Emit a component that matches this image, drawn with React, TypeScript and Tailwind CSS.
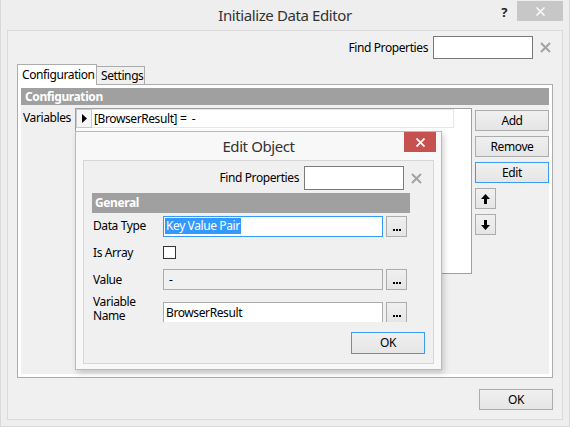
import React from "react";

function GrayX() {
  return (
    <svg width="11" height="11" viewBox="0 0 11 11">
      <path d="M1 1L10 10M10 1L1 10" stroke="#a3a3a3" strokeWidth="2" />
    </svg>
  );
}

function WhiteX({ size = 9, w = 1.6 }: { size?: number; w?: number }) {
  return (
    <svg width={size} height={size} viewBox="0 0 9 9">
      <path d="M0.5 0.5L8.5 8.5M8.5 0.5L0.5 8.5" stroke="#ffffff" strokeWidth={w} />
    </svg>
  );
}

function UpArrow() {
  return (
    <svg width="9" height="10" viewBox="0 0 9 10">
      <path d="M4.5 0L9 5H6V10H3V5H0Z" fill="#000" />
    </svg>
  );
}

function DownArrow() {
  return (
    <svg width="9" height="10" viewBox="0 0 9 10">
      <path d="M4.5 10L9 5H6V0H3V5H0Z" fill="#000" />
    </svg>
  );
}

function Btn({
  children,
  className = "",
  def = false,
}: {
  children: React.ReactNode;
  className?: string;
  def?: boolean;
}) {
  return (
    <div
      className={
        "flex items-center justify-center border bg-gradient-to-b from-[#f0f0f0] to-[#e5e5e5] text-[12px] text-black " +
        (def ? "border-[#3c9bf0] " : "border-[#acacac] ") +
        className
      }
    >
      {children}
    </div>
  );
}

function Dots() {
  return (
    <div className="flex h-[21px] w-[21px] items-end justify-center border border-[#acacac] bg-gradient-to-b from-[#f0f0f0] to-[#e5e5e5] pb-[5px]">
      <div className="flex gap-[1px]">
        <div className="h-[2px] w-[2px] bg-black" />
        <div className="h-[2px] w-[2px] bg-black" />
        <div className="h-[2px] w-[2px] bg-black" />
      </div>
    </div>
  );
}

export default function App() {
  return (
    <div className="relative h-[427px] w-[570px] overflow-hidden border-x border-b border-[#d9d9d9] bg-[#eeeeee] font-['Noto_Sans',sans-serif] text-[12px] tracking-[-0.4px] text-black">
      {/* Title bar */}
      <div className="grid h-[30px] grid-cols-[1fr_auto_1fr]">
        <div />
        <div className="pt-[4px] text-[15px] text-[#333333]">Initialize Data Editor</div>
        <div className="flex items-start justify-end pr-[6px]">
          <div className="mr-[10px] mt-[3px] text-[13px] font-bold text-[#222]">?</div>
          <div className="mt-[1px] flex h-[20px] w-[46px] items-center justify-center bg-[#c7c7c7]">
            <WhiteX size={9} w={1.5} />
          </div>
        </div>
      </div>

      {/* Inner panel */}
      <div className="mx-[6px] flex h-[390px] flex-col border border-[#dadada] bg-[#f0f0f0]">
        {/* Find properties */}
        <div className="mt-[5px] flex items-center justify-end pr-[11px]">
          <span className="mr-[5px]">Find Properties</span>
          <div className="h-[23px] w-[100px] border border-[#7a7a7a] bg-white" />
          <div className="ml-[7px] flex h-[11px] w-[11px] items-center justify-center">
            <GrayX />
          </div>
        </div>

        {/* Tabs */}
        <div className="ml-[9px] mt-[5px] flex h-[20px] items-end">
          <div className="relative z-10 -mb-[1px] flex h-[21px] w-[80px] items-start border border-b-0 border-[#acacac] bg-white pl-[4px] pt-[1px]">
            Configuration
          </div>
          <div className="flex h-[18px] w-[48px] items-center border border-b-0 border-l-0 border-[#acacac] bg-[#f0f0f0] pl-[4px]">
            Settings
          </div>
        </div>

        {/* Tab page */}
        <div className="ml-[9px] h-[294px] w-[536px] border border-[#acacac] bg-white p-[3px]">
          <div className="flex h-full flex-col bg-[#f0f0f0]">
            <div className="flex h-[17px] items-center bg-[#a0a0a0] pl-[4px] text-[12px] font-bold text-white">
              Configuration
            </div>
            <div className="mt-[3px] flex">
              <div className="w-[54px] pl-[2px] pt-[1px]">Variables</div>
              <div className="h-[166px] w-[397px] border border-[#a0a0a0] bg-white">
                <div className="flex h-[19px]">
                  <div className="flex w-[16px] items-center justify-center border border-[#c8c8c8] bg-[#f6f6f6]">
                    <svg width="5" height="9" viewBox="0 0 5 9">
                      <path d="M0 0L5 4.5L0 9Z" fill="#000" />
                    </svg>
                  </div>
                  <div className="flex w-[362px] items-center border-y border-r border-[#e6e6e6] pl-[2px]">
                    [BrowserResult] =&nbsp; -
                  </div>
                </div>
              </div>
              <div className="ml-[3px] mt-[2px] flex flex-col gap-[5px]">
                <Btn className="h-[21px] w-[74px]">Add</Btn>
                <Btn className="h-[21px] w-[74px]">Remove</Btn>
                <Btn className="h-[21px] w-[74px]" def>
                  Edit
                </Btn>
                <Btn className="h-[21px] w-[21px]">
                  <UpArrow />
                </Btn>
                <Btn className="h-[21px] w-[21px]">
                  <DownArrow />
                </Btn>
              </div>
            </div>
          </div>
        </div>

        {/* OK */}
        <div className="mt-[11px] flex justify-end pr-[9px]">
          <Btn className="h-[21px] w-[74px]">OK</Btn>
        </div>
      </div>

      {/* Edit Object dialog (overlay) */}
      <div className="absolute left-[74px] top-[131px] flex h-[239px] w-[367px] flex-col border border-[#b9b9b9] bg-[#f8f8f8] shadow-[2px_3px_6px_rgba(0,0,0,0.18)]">
        <div className="relative flex h-[28px] items-start justify-center">
          <div className="pt-[3px] text-[15px] text-[#333333]">Edit Object</div>
          <div className="absolute right-[5px] top-0 flex h-[20px] w-[32px] items-center justify-center bg-[#c75050]">
            <WhiteX size={9} w={1.8} />
          </div>
        </div>
        <div className="mx-[7px] flex h-[204px] flex-col border border-[#d6d6d6] bg-[#f0f0f0]">
          <div className="mt-[5px] flex items-center justify-end pr-[11px]">
            <span className="mr-[5px]">Find Properties</span>
            <div className="h-[24px] w-[100px] border border-[#7a7a7a] bg-white" />
            <div className="ml-[7px] flex h-[11px] w-[11px] items-center justify-center">
              <GrayX />
            </div>
          </div>
          <div className="ml-[8px] mt-[3px] h-[129px] w-[318px] overflow-hidden">
            <div className="flex h-[20px] items-center bg-[#a0a0a0] pl-[3px] font-bold text-white">General</div>
            <div className="flex h-[26px] items-center">
              <div className="w-[71px] pl-[1px]">Data Type</div>
              <div className="flex h-[21px] w-[220px] items-center border border-[#3399ff] bg-white pl-[1px]">
                <span className="bg-[#3399ff] px-[1px] leading-[16px] text-white">Key Value Pair</span>
              </div>
              <div className="ml-[3px]">
                <Dots />
              </div>
            </div>
            <div className="flex h-[27px] items-center">
              <div className="w-[71px] pl-[1px]">Is Array</div>
              <div className="h-[13px] w-[13px] border border-[#333333] bg-white" />
            </div>
            <div className="flex h-[27px] items-center">
              <div className="w-[71px] pl-[1px]">Value</div>
              <div className="flex h-[21px] w-[220px] items-center border border-[#acacac] bg-[#f0f0f0] pl-[5px]">-</div>
              <div className="ml-[3px]">
                <Dots />
              </div>
            </div>
            <div className="flex h-[40px] items-start">
              <div className="w-[71px] pl-[1px] pt-[2px] leading-[14px]">
                <div>Variable</div>
                <div>Name</div>
              </div>
              <div className="mt-[9px] flex h-[21px] w-[220px] items-center border border-[#acacac] bg-white pl-[2px]">
                BrowserResult
              </div>
              <div className="ml-[3px] mt-[9px]">
                <Dots />
              </div>
            </div>
          </div>
          <div className="mt-[10px] flex justify-end pr-[8px]">
            <Btn className="h-[22px] w-[74px]" def>
              OK
            </Btn>
          </div>
        </div>
      </div>
    </div>
  );
}
